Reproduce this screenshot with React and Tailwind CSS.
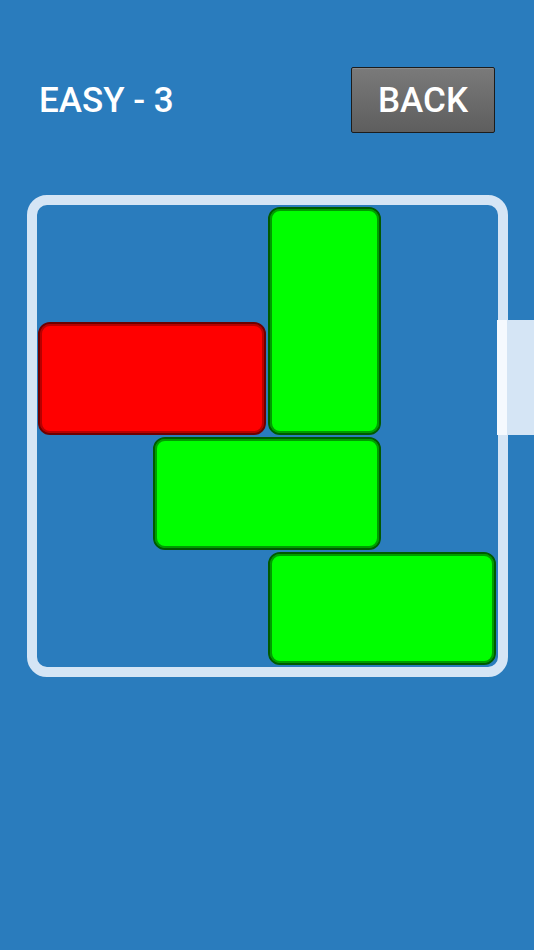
import React from "react";

const font = { fontFamily: "Roboto, 'Noto Sans', sans-serif" };

// blocks on a 4x4 board, each cell is 115px
const blocks = [
  { id: "v1", color: "green", cls: "col-start-3 col-span-1 row-start-1 row-span-2" },
  { id: "red", color: "red", cls: "col-start-1 col-span-2 row-start-2 row-span-1" },
  { id: "h1", color: "green", cls: "col-start-2 col-span-2 row-start-3 row-span-1" },
  { id: "h2", color: "green", cls: "col-start-3 col-span-2 row-start-4 row-span-1" },
];

const Block = ({ color, cls }) => {
  const look =
    color === "red"
      ? "bg-[#ff0000] border-[#6e0000] shadow-[inset_0_0_0_2px_#b80000]"
      : "bg-[#00ff00] border-[#005a00] shadow-[inset_0_0_0_2px_#009c00]";
  return <div className={`${cls} m-px rounded-[12px] border-2 ${look}`} />;
};

export default function App() {
  return (
    <div className="min-h-[950px] w-full bg-[#2a7cbd] overflow-hidden" style={font}>
      {/* Header */}
      <div className="flex items-center justify-between pl-[39px] pr-[39px] pt-[67px]">
        <span className="text-[35px] leading-none font-medium text-white">
          EASY - 3
        </span>
        <button className="h-[66px] w-[144px] rounded-[2px] border border-[#1c1c1c] bg-linear-to-b from-[#7a7a7a] to-[#5e5e5e] text-[35px] leading-none font-medium text-white shadow-[inset_0_1px_0_#8a8a8a]">
          BACK
        </button>
      </div>

      {/* Board */}
      <div className="relative mt-[62px] ml-[27px] w-[481px]">
        <div className="rounded-[20px] border-[10px] border-[#d5e5f5] py-px">
          <div className="grid grid-cols-[repeat(4,115px)] grid-rows-[repeat(4,115px)]">
            {blocks.map((b) => (
              <Block key={b.id} {...b} />
            ))}
          </div>
        </div>
        {/* exit gate */}
        <div className="absolute left-[470px] top-[125px] flex h-[115px] w-[40px]">
          <div className="w-[10px] bg-[#f5f9fe]" />
          <div className="flex-1 bg-[#d5e5f5]" />
        </div>
      </div>
    </div>
  );
}
